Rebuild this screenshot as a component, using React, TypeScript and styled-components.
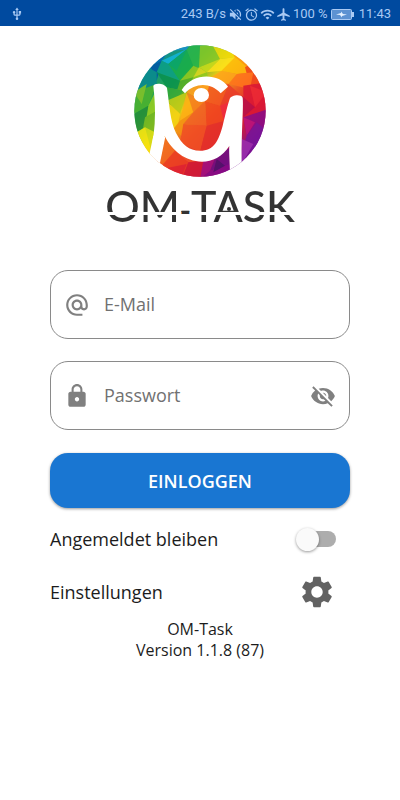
import React, { useState } from 'react';
import styled, { createGlobalStyle } from 'styled-components';
import {
  MdAirplanemodeActive,
  MdAlarm,
  MdAlternateEmail,
  MdLock,
  MdSettings,
  MdUsb,
  MdVisibility,
  MdVisibilityOff,
  MdVolumeOff,
  MdWifi,
} from 'react-icons/md';

const GlobalStyle = createGlobalStyle`
  * { box-sizing: border-box; }
  body {
    margin: 0;
    background: #fff;
    color: #1c1c1c;
    font-family: 'Open Sans', 'Noto Sans', sans-serif;
  }
`;

const Screen = styled.div`
  display: flex;
  flex-direction: column;
  min-height: 100vh;
`;

const StatusBar = styled.header`
  display: flex;
  align-items: center;
  justify-content: space-between;
  height: 26px;
  padding: 2px 9px 0 10px;
  background: #004a9f;
  color: #a9c9f3;
  font: 13px/16px Roboto, sans-serif;
`;

const StatusGroup = styled.div`
  display: flex;
  align-items: center;
  gap: 2px;
  white-space: nowrap;
`;

const StatusIcons = styled.span`
  display: flex;
  gap: 1px;
`;

const BatteryIcon = styled.svg`
  width: 23px;
  height: 11px;
  margin: 0 3px 0 1px;
`;

const Main = styled.main`
  display: flex;
  flex-direction: column;
  padding: 18px 50px 24px;
`;

const Brand = styled.h1`
  display: flex;
  flex-direction: column;
  align-items: center;
  margin: 0 0 40px;
`;

const Emblem = styled.svg`
  width: 134px;
  height: 134px;
`;

const WordmarkFrame = styled.span`
  position: relative;
  display: block;
  height: 48px;
  margin-top: 4px;
  &::after {
    content: '';
    position: absolute;
    left: 64%;
    top: 25px;
    width: 4px;
    height: 4px;
    border-radius: 50%;
    background: #333;
  }
`;

const Wordmark = styled.span`
  display: block;
  font: 500 43px/48px Lato, sans-serif;
  white-space: nowrap;
  color: transparent;
  background: linear-gradient(#333 30px, transparent 30px 33px, #333 33px);
  background-clip: text;
  -webkit-background-clip: text;
`;

const WordmarkDash = styled.span`
  font-size: 30px;
  font-weight: 700;
  line-height: 1;
  color: #333;
`;

const Form = styled.form`
  display: flex;
  flex-direction: column;
`;

const Field = styled.label`
  display: flex;
  align-items: center;
  height: 69px;
  margin-bottom: 22px;
  padding: 0 13px;
  border: 1px solid #8a8a8a;
  border-radius: 18px;
  color: #808080;
`;

const FieldInput = styled.input`
  flex: 1;
  min-width: 0;
  margin-left: 14px;
  padding: 0 0 2px;
  border: 0;
  outline: 0;
  background: none;
  color: #1c1c1c;
  font: 18px/24px 'Open Sans', sans-serif;
  &::placeholder { color: #717171; opacity: 1; }
`;

const IconButton = styled.button`
  display: flex;
  padding: 0;
  border: 0;
  background: none;
  color: inherit;
  cursor: pointer;
`;

const SubmitButton = styled.button`
  height: 55px;
  margin-top: 1px;
  border: 0;
  border-radius: 18px;
  background: #1976d2;
  box-shadow: 0 1px 3px rgba(0, 0, 0, 0.4);
  color: #fff;
  font: 600 18px/24px 'Open Sans', sans-serif;
  cursor: pointer;
`;

const OptionRow = styled.div<{ $height: number }>`
  display: flex;
  align-items: center;
  justify-content: space-between;
  height: ${(p) => p.$height}px;
  padding-right: 14px;
  font-size: 18px;
  line-height: 24px;
`;

const Switch = styled.input`
  appearance: none;
  display: flex;
  align-items: center;
  width: 38px;
  height: 16px;
  margin: 0;
  border-radius: 8px;
  background: linear-gradient(#adadad, #adadad) right / 34px 16px no-repeat;
  cursor: pointer;
  &::before {
    content: '';
    flex: none;
    width: 23px;
    height: 23px;
    margin-left: -2px;
    border-radius: 50%;
    background: #fafafa;
    box-shadow: 0 1px 3px rgba(0, 0, 0, 0.4);
  }
  &:checked { background: #8fbbea; justify-content: flex-end; }
  &:checked::before { background: #1976d2; }
`;

const SettingsButton = styled(IconButton)`
  color: #626262;
`;

const Footer = styled.footer`
  margin-top: 5px;
  text-align: center;
  font-size: 16px;
  line-height: 21px;
`;

const facets: [string, string][] = [
  ['27,20 130,20 95,110 27,200', '#0879ad'],
  ['75,90 110,75 95,135', '#0055a5'],
  ['75,90 110,75 135,40 60,90', '#0067b8'],
  ['110,75 185,40 130,85', '#12b4dc'],
  ['135,45 195,25 185,42', '#1b8fd0'],
  ['110,75 130,85 165,135 95,110', '#0c9f87'],
  ['130,85 185,42 205,90 165,135', '#18ad4d'],
  ['130,85 185,42 155,105', '#0aa768'],
  ['185,42 200,25 225,30 222,95 205,90', '#2bb54a'],
  ['225,30 260,25 285,70 222,95', '#8bc926'],
  ['222,95 285,70 245,110', '#cddc19'],
  ['260,25 310,30 330,65 285,70', '#f5dc08'],
  ['285,70 330,65 290,105 245,110', '#ffe31a'],
  ['310,30 355,60 385,110 330,65', '#ff9a10'],
  ['330,65 385,110 335,115 290,105', '#ffbd0b'],
  ['385,80 425,170 375,150 360,95', '#f04a1c'],
  ['335,115 385,110 375,160 310,145', '#ff761c'],
  ['290,105 335,115 310,145 250,130', '#ffa51b'],
  ['205,90 245,110 250,130 180,140 165,135', '#92c91f'],
  ['222,95 245,110 205,125', '#e2d71d'],
  ['95,110 165,135 175,165 125,155', '#09914f'],
  ['165,135 205,125 185,170 145,200', '#53ad28'],
  ['125,155 175,165 145,200 125,230', '#30a63b'],
  ['60,90 95,110 95,160 27,170', '#0a8a8e'],
  ['27,170 95,145 70,210 27,235', '#4eb22c'],
  ['27,170 65,145 50,205', '#8ac522'],
  ['70,210 95,160 95,260 60,245', '#9bce21'],
  ['27,235 70,210 60,275 35,290', '#268c38'],
  ['60,245 95,225 85,320 50,300', '#76b820'],
  ['35,290 60,275 85,300 75,360', '#f7e510'],
  ['60,275 90,290 80,350', '#d6dd16'],
  ['125,195 185,170 165,235', '#bbcc18'],
  ['125,195 165,235 155,290 120,240', '#f5d413'],
  ['185,170 205,230 165,255', '#ffaf14'],
  ['165,255 205,230 180,310 145,280', '#f59212'],
  ['185,170 240,195 205,230', '#f77c1f'],
  ['200,150 255,140 240,195 185,170', '#ff9920'],
  ['255,140 310,145 285,210 240,195', '#f35522'],
  ['310,145 350,180 300,205 285,210', '#e83d2a'],
  ['205,230 240,195 245,270 175,265', '#f06125'],
  ['240,195 285,210 300,255 245,270', '#f0451f'],
  ['175,265 245,270 225,350 165,320', '#f04f24'],
  ['245,270 300,255 270,350 225,350', '#e4302a'],
  ['285,210 310,200 300,270', '#ef2840'],
  ['355,150 425,140 430,220 355,245', '#db1834'],
  ['375,150 425,170 390,215', '#ed2735'],
  ['350,180 390,215 355,245', '#b70e4a'],
  ['355,245 430,220 420,275 365,300', '#8c0c85'],
  ['355,245 390,260 365,300', '#ba137e'],
  ['365,300 395,260 420,280 390,340 350,350', '#76149a'],
  ['350,310 385,325 350,385', '#9b30b0'],
  ['120,300 150,345 115,385 95,380', '#f16b22'],
  ['115,385 150,345 190,380 175,420 110,410', '#ec4023'],
  ['150,345 235,375 190,380', '#f0532a'],
  ['190,380 235,375 230,430 170,430', '#d11b36'],
  ['110,400 185,385 170,425', '#e02331'],
  ['235,375 270,368 255,405 225,430', '#a01082'],
  ['270,368 315,335 312,390 255,405', '#6d0d83'],
  ['255,405 315,385 315,425 225,430', '#850a86'],
  ['275,370 300,390 265,410', '#47116b'],
];

function Logo() {
  return (
    <Emblem viewBox="24 25 402 402" aria-hidden="true">
      <defs>
        <clipPath id="disc"><circle cx="225" cy="226" r="197" /></clipPath>
        <linearGradient id="hue" x1="0" y1="0" x2="1" y2="1">
          <stop offset="0.1" stopColor="#0785ac" />
          <stop offset="0.3" stopColor="#29aa45" />
          <stop offset="0.43" stopColor="#ecca15" />
          <stop offset="0.56" stopColor="#ed5525" />
          <stop offset="0.7" stopColor="#d41e35" />
          <stop offset="0.84" stopColor="#790f91" />
        </linearGradient>
      </defs>
      <g clipPath="url(#disc)">
        <rect x="24" y="25" width="402" height="402" fill="url(#hue)" />
        <g opacity="0.85">
          {facets.map(([points, fill]) => <polygon key={points} points={points} fill={fill} />)}
        </g>
        <g fill="#fff">
          <path d="M85 151C88 140 119 142 126 157C134 211 135 255 153 292C171 327 192 345 225 345C268 345 281 314 293 270C302 234 307 211 314 190C319 177 349 175 353 186C356 213 349 280 350 390L315 424C315 384 311 348 313 331C292 364 262 378 231 378C181 377 142 346 119 301C113 334 106 362 102 390L74 360C91 292 94 229 85 151Z" />
          <path d="M102 396L72 362L85 300L121 303Z" />
          <path d="M170 163C202 111 280 111 309 153L287 173C258 141 212 139 180 173Z" />
          <ellipse cx="229" cy="178" rx="23" ry="21" />
        </g>
      </g>
    </Emblem>
  );
}

export default function App() {
  const [visible, setVisible] = useState(false);
  return (
    <Screen>
      <GlobalStyle />
      <StatusBar>
        <MdUsb size={14} />
        <StatusGroup>
          <span>243 B/s</span>
          <StatusIcons>
            <MdVolumeOff size={15} />
            <MdAlarm size={15} />
            <MdWifi size={15} />
            <MdAirplanemodeActive size={15} />
          </StatusIcons>
          <span>100 %</span>
          <BatteryIcon viewBox="0 0 23 11" aria-hidden="true">
            <rect x="0.5" y="0.5" width="20" height="10" rx="1" fill="#5d92d2" stroke="#a9c9f3" />
            <path d="M22 3v5" stroke="#a9c9f3" strokeWidth="2" />
            <path d="M5 5.5L10 4V2.500L12 5L16 5.500L11 7V8.500L9 6Z" fill="#e5f1ff" />
          </BatteryIcon>
          <span>11:43</span>
        </StatusGroup>
      </StatusBar>
      <Main>
        <Brand>
          <Logo />
          <WordmarkFrame>
            <Wordmark>OM<WordmarkDash>-</WordmarkDash>TASK</Wordmark>
          </WordmarkFrame>
        </Brand>
        <Form onSubmit={(e) => e.preventDefault()}>
          <Field>
            <MdAlternateEmail size={26} />
            <FieldInput type="email" placeholder="E-Mail" aria-label="E-Mail" />
          </Field>
          <Field>
            <MdLock size={26} />
            <FieldInput type={visible ? 'text' : 'password'} placeholder="Passwort" aria-label="Passwort" />
            <IconButton type="button" aria-label="Passwort anzeigen" onClick={() => setVisible(!visible)}>
              {visible ? <MdVisibility size={26} /> : <MdVisibilityOff size={26} />}
            </IconButton>
          </Field>
          <SubmitButton type="submit">EINLOGGEN</SubmitButton>
          <OptionRow $height={62}>
            <label htmlFor="stay">Angemeldet bleiben</label>
            <Switch id="stay" type="checkbox" role="switch" />
          </OptionRow>
          <OptionRow $height={44}>
            <span id="settings-label">Einstellungen</span>
            <SettingsButton type="button" aria-labelledby="settings-label"><MdSettings size={38} /></SettingsButton>
          </OptionRow>
        </Form>
        <Footer>
          <div>OM-Task</div>
          <div>Version 1.1.8 (87)</div>
        </Footer>
      </Main>
    </Screen>
  );
}
